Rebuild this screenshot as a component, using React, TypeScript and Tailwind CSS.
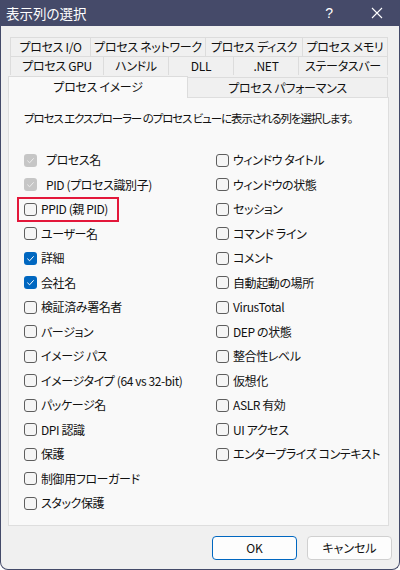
import React from "react";

type State = "off" | "on" | "disabled";

const leftItems: { label: string; state: State; mark?: boolean }[] = [
  { label: "プロセス名", state: "disabled" },
  { label: "PID (プロセス識別子)", state: "disabled" },
  { label: "PPID (親 PID)", state: "off", mark: true },
  { label: "ユーザー名", state: "off" },
  { label: "詳細", state: "on" },
  { label: "会社名", state: "on" },
  { label: "検証済み署名者", state: "off" },
  { label: "バージョン", state: "off" },
  { label: "イメージ パス", state: "off" },
  { label: "イメージタイプ (64 vs 32-bit)", state: "off" },
  { label: "パッケージ名", state: "off" },
  { label: "DPI 認識", state: "off" },
  { label: "保護", state: "off" },
  { label: "制御用フローガード", state: "off" },
  { label: "スタック保護", state: "off" },
];

const rightItems: { label: string; state: State; mark?: boolean }[] = [
  { label: "ウィンドウ タイトル", state: "off" },
  { label: "ウィンドウの状態", state: "off" },
  { label: "セッション", state: "off" },
  { label: "コマンド ライン", state: "off" },
  { label: "コメント", state: "off" },
  { label: "自動起動の場所", state: "off" },
  { label: "VirusTotal", state: "off" },
  { label: "DEP の状態", state: "off" },
  { label: "整合性レベル", state: "off" },
  { label: "仮想化", state: "off" },
  { label: "ASLR 有効", state: "off" },
  { label: "UI アクセス", state: "off" },
  { label: "エンタープライズ コンテキスト", state: "off" },
];

const Box = ({ state }: { state: State }) => {
  if (state === "off") {
    return (
      <span className="w-[13px] h-[13px] shrink-0 rounded-[3px] border border-[#5e5e5e] bg-[#f5f5f5]" />
    );
  }
  const on = state === "on";
  return (
    <span
      className={
        on
          ? "w-[13px] h-[13px] shrink-0 rounded-[3px] bg-[#0067c0] flex items-center justify-center"
          : "w-[13px] h-[13px] shrink-0 rounded-[3px] bg-[#c6c6c6] flex items-center justify-center"
      }
    >
      <svg width="13" height="13" viewBox="0 0 13 13">
        <path
          d="M3.6 6.9 L5.6 8.8 L9.4 4.6"
          fill="none"
          stroke={on ? "#ffffff" : "#ededed"}
          strokeWidth="1"
          strokeLinecap="round"
          strokeLinejoin="round"
        />
      </svg>
    </span>
  );
};

const Row = ({ label, state, mark }: { label: string; state: State; mark?: boolean }) => (
  <div className="relative h-[24.5px] flex items-center">
    {mark && (
      <span className="absolute -left-[7px] top-0 bottom-0 w-[102px] border-2 border-[#e3173a]" />
    )}
    <Box state={state} />
    <span
      className={
        state === "disabled"
          ? "ml-[9px] whitespace-nowrap tracking-[-0.4px]"
          : "ml-[4px] whitespace-nowrap tracking-[-0.4px]"
      }
    >
      {label}
    </span>
  </div>
);

const Tab = ({ label, w, last }: { label: string; w: string; last?: boolean }) => (
  <div
    className={`${w} h-full flex items-center justify-center border-t border-l border-[#dcdcdc] bg-[#f0f0f0] tracking-[-0.3px] ${
      last ? "border-r" : ""
    }`}
  >
    {label}
  </div>
);

export default function App() {
  return (
    <div className="w-[400px] h-[570px] overflow-hidden rounded-b-[8px] border border-t-0 border-[#444a69] bg-[#f0f0f0] flex flex-col text-[12px] text-[#111] font-['Noto_Sans_CJK_JP',sans-serif] [font-feature-settings:'palt']">
      <div className="h-[26px] bg-[#454a69] flex items-center text-white shrink-0 -mx-px">
        <span className="pl-[6px] text-[13.5px]">表示列の選択</span>
        <span className="ml-auto mr-[38px] text-[14px] font-['Liberation_Sans',sans-serif]">?</span>
        <svg className="mr-[17px]" width="12" height="12" viewBox="0 0 12 12">
          <path d="M1 1 L11 11 M11 1 L1 11" stroke="#ffffff" strokeWidth="1.1" fill="none" />
        </svg>
      </div>

      <div className="pt-[11px] pl-[7px] pr-[10px] flex flex-col flex-1">
        <div className="pl-[2px] h-[19px] flex">
          <Tab label="プロセス I/O" w="w-[80px]" />
          <Tab label="プロセス ネットワーク" w="w-[115px]" />
          <Tab label="プロセス ディスク" w="w-[97px]" />
          <Tab label="プロセス メモリ" w="w-[86px]" last />
        </div>
        <div className="pl-[2px] h-[19px] flex">
          <Tab label="プロセス GPU" w="w-[93px]" />
          <Tab label="ハンドル" w="w-[65px]" />
          <Tab label="DLL" w="w-[65px]" />
          <Tab label=".NET" w="w-[65px]" />
          <Tab label="ステータスバー" w="w-[90px]" last />
        </div>
        <div className="h-[22px] flex items-end">
          <div className="w-[180px] h-[22px] pb-[2px] flex items-center justify-center border-t border-l border-r border-[#dcdcdc] bg-[#f9f9f9] relative z-10 -mb-px tracking-[-0.3px]">
            プロセス イメージ
          </div>
          <div className="w-[200px] h-[20px] flex items-center justify-center border-t border-r border-[#dcdcdc] bg-[#f0f0f0] tracking-[-0.3px]">
            プロセス パフォーマンス
          </div>
        </div>

        <div className="h-[429px] border border-[#dedede] bg-[#f9f9f9] pt-[11px] pl-[15px]">
          <div className="h-[18px] leading-[18px] whitespace-nowrap text-[11.5px] tracking-[-1.1px]">
            プロセス エクスプローラー のプロセス ビューに表示される列を選択します。
          </div>
          <div className="mt-[21px] flex">
            <div className="w-[192px] flex flex-col">
              {leftItems.map((it, i) => (
                <Row key={i} {...it} />
              ))}
            </div>
            <div className="flex flex-col">
              {rightItems.map((it, i) => (
                <Row key={i} {...it} />
              ))}
            </div>
          </div>
        </div>

        <div className="mt-[10px] flex justify-end gap-[10px] -mr-[3px]">
          <button className="w-[85px] h-[24px] rounded-[4px] border border-[#0067c0] bg-[#fdfdfd] text-[12px]">
            OK
          </button>
          <button className="w-[85px] h-[24px] rounded-[4px] border border-[#d0d0d0] bg-[#fdfdfd] text-[12px]">
            キャンセル
          </button>
        </div>
      </div>
    </div>
  );
}
